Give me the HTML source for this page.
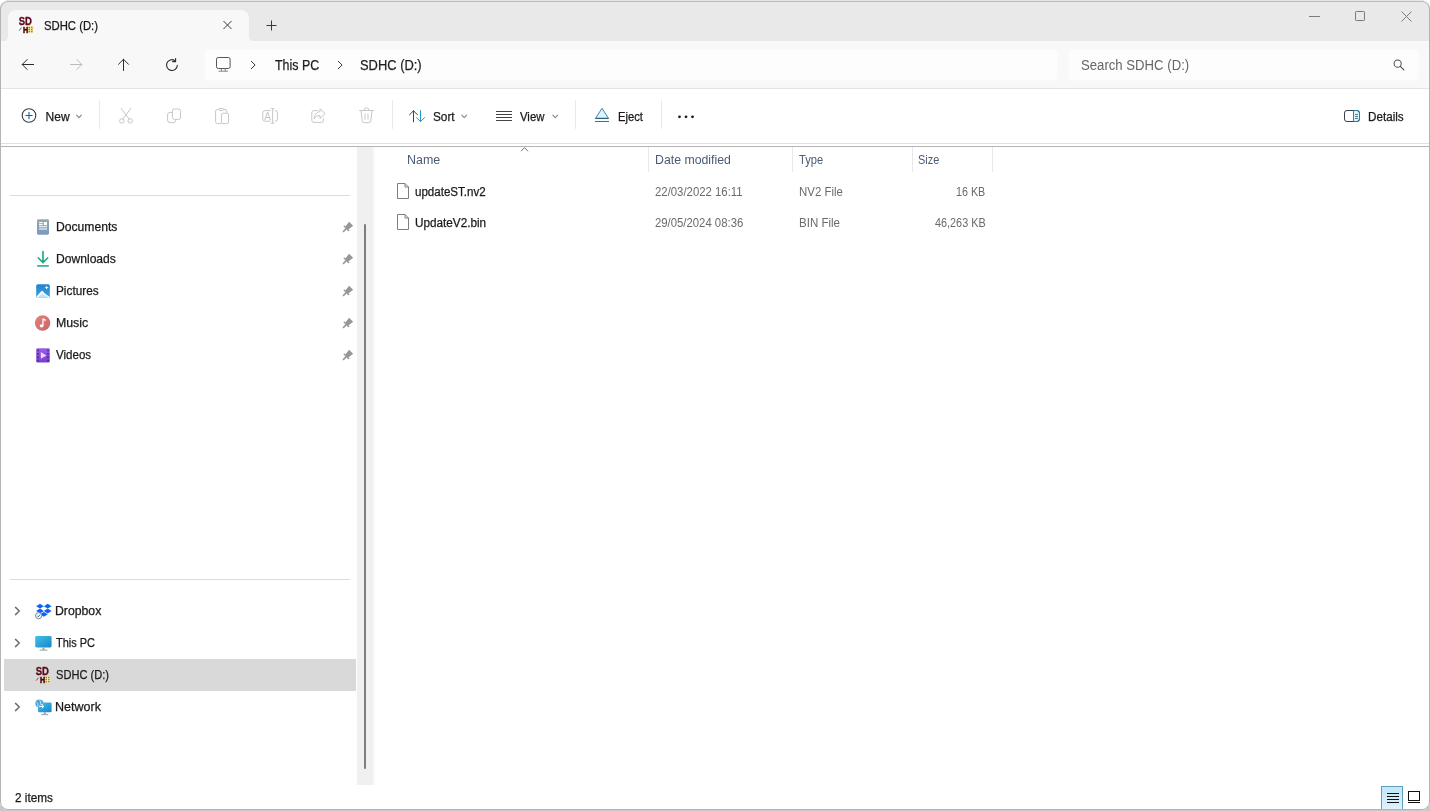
<!DOCTYPE html>
<html lang="en">
<head>
<meta charset="utf-8">
<title>SDHC (D:)</title>
<style>
*{box-sizing:border-box;margin:0;padding:0}
html,body{width:1430px;height:811px;overflow:hidden;background:#fff}
#toprow{position:absolute;left:6px;top:0;width:1418px;height:2px;background:#e6e6e6}
body{font-family:"Liberation Sans",sans-serif;font-size:12px;color:#1b1b1b;position:relative}
#under{position:absolute;left:0;top:800px;width:1430px;height:11px;background:#c8c8c8}
#win{will-change:transform;position:absolute;left:0;top:1px;width:1430px;height:809px;border-radius:8px;overflow:hidden;background:#fff}
#win > *{margin-top:-1px}
#frame{position:absolute;left:0;top:1px;width:1430px;height:809px;border-radius:8px;border:1px solid #b4b4b4;border-top-color:#bcbcbc;pointer-events:none}
#titlebar{position:absolute;left:0;top:0;width:1430px;height:42px;background:#e9e9e9}
#tab{position:absolute;left:8px;top:10px;width:241px;height:32px;background:#f8f8f8;border-radius:8px 8px 0 0}
#navrow{position:absolute;left:0;top:41px;width:1430px;height:48px;background:#f8f8f8;border-bottom:1px solid #e4e4e4}
#addr{position:absolute;left:205px;top:50px;width:852px;height:30px;background:#fdfdfd;border-radius:4px;box-shadow:0 0 2px 1px #fbfbfb}
#search{position:absolute;left:1069px;top:50px;width:349px;height:30px;background:#fdfdfd;border-radius:4px;box-shadow:0 0 2px 1px #fbfbfb}
#toolbar{position:absolute;left:0;top:89px;width:1430px;height:55px;background:#fff}
.t{position:absolute;white-space:nowrap;line-height:1;-webkit-text-stroke:0.25px currentColor}
.sep{position:absolute;width:1px;background:#eaeaea}
svg{position:absolute;overflow:visible}
#main{position:absolute;left:0;top:143px;width:1430px;height:668px;background:#fff}
#line1{position:absolute;left:0;top:143px;width:1430px;height:1px;background:#e0e0e0}
#line2{position:absolute;left:0;top:146px;width:1430px;height:1px;background:#b4b4b4}
#gutter{position:absolute;left:357px;top:147px;width:16px;height:638px;background:#f0f0f0}
#gutter2{position:absolute;left:373px;top:147px;width:2px;height:638px;background:#f9f9f9}
#thumb{position:absolute;left:364px;top:224px;width:2px;height:545px;background:#7e7e7e;border-radius:1px}
.hr{position:absolute;left:10px;width:340px;height:1px;background:#dcdcdc}
#sel{position:absolute;left:4px;top:659px;width:352px;height:32px;background:#d9d9d9}
.colsep{position:absolute;top:147px;width:1px;height:25px;background:#e8e8e8}
#vbtn{position:absolute;left:1381px;top:786px;width:22px;height:25px;background:linear-gradient(#c3e6f8,#dff2fc);border:1px solid #5f9fc0}
.tabcurveL{position:absolute;left:2px;top:36px;width:6px;height:6px;background:radial-gradient(circle at 0 0,#e9e9e9 5.6px,#f8f8f8 6.2px)}
.tabcurveR{position:absolute;left:249px;top:36px;width:6px;height:6px;background:radial-gradient(circle at 100% 0,#e9e9e9 5.6px,#f8f8f8 6.2px)}

</style>
</head>
<body>
<div id="under"></div><div id="toprow"></div>
<div id="win">
<div id="titlebar"><div id="tab"></div>
<div class="tabcurveL"></div><div class="tabcurveR"></div>
<svg style="left:18px;top:17px" width="16" height="16" viewBox="0 0 16 16">
<text x="0.7" y="7.5" font-family="Liberation Sans, sans-serif" font-weight="bold" font-size="10.5" fill="#5e0a1c" stroke="#5e0a1c" stroke-width="0.35" textLength="13.2" lengthAdjust="spacingAndGlyphs">SD</text>
<rect x="10" y="9.4" width="5.2" height="6.2" fill="#f6e9a0"/>
<g fill="#8a6a14"><rect x="10.6" y="9.8" width="1.3" height="1.3"/><rect x="13.2" y="9.8" width="1.3" height="1.3"/><rect x="10.6" y="11.9" width="1.3" height="1.3"/><rect x="13.2" y="11.9" width="1.3" height="1.3"/><rect x="10.6" y="14" width="1.3" height="1.3"/><rect x="13.2" y="14" width="1.3" height="1.3"/></g>
<text x="4.9" y="15.5" font-family="Liberation Sans, sans-serif" font-weight="bold" font-size="8.7" fill="#4a0606" stroke="#5a0a08" stroke-width="0.6" textLength="5.2" lengthAdjust="spacingAndGlyphs">H</text>
<path d="M1.2 13.6 L3.6 10.6" stroke="#5a4a4a" stroke-width="0.9" fill="none"/>
</svg>
<div class="t" style="left:43.92px;top:19.5px;font-size:12px;color:#1a1a1a;transform:scaleX(0.9419);transform-origin:0 50%;">SDHC (D:)</div>
<svg style="left:223px;top:20px" width="9" height="9" viewBox="0 0 9 9"><g transform="translate(0 0.5)"><path d="M0.5 0.5 L8.5 8.5 M8.5 0.5 L0.5 8.5" stroke="#3a3a3a" stroke-width="1" fill="none"/></g></svg>
<svg style="left:266px;top:20px" width="11" height="11" viewBox="0 0 11 11"><path d="M5.5 0.5 V10.5 M0.5 5.5 H10.5" stroke="#3a3a3a" stroke-width="1" fill="none"/></svg>
<svg style="left:1309px;top:16px" width="12" height="2" viewBox="0 0 12 2"><path d="M0 0.5 H11" stroke="#7c7c7c" stroke-width="1"/></svg>
<svg style="left:1355px;top:11px" width="11" height="11" viewBox="0 0 11 11"><rect x="0.5" y="0.5" width="9" height="9" rx="0.8" fill="none" stroke="#787878" stroke-width="1"/></svg>
<svg style="left:1401px;top:11px" width="11" height="11" viewBox="0 0 11 11"><path d="M0.5 0.5 L10.5 10.5 M10.5 0.5 L0.5 10.5" stroke="#7c7c7c" stroke-width="1" fill="none"/></svg>
</div>
<div id="navrow"></div><div id="addr"></div><div id="search"></div>
<svg style="left:21px;top:57px" width="14" height="14" viewBox="0 0 14 14"><g transform="translate(0 0.5)"><path d="M12.6 7 H1.2 M6.2 2 L1.2 7 L6.2 12" stroke="#2b2b2b" stroke-width="1" fill="none" stroke-linecap="round" stroke-linejoin="round"/></g></svg>
<svg style="left:69px;top:57px" width="14" height="14" viewBox="0 0 14 14"><g transform="translate(0 0.5)"><path d="M1.4 7 H12.8 M7.8 2 L12.8 7 L7.8 12" stroke="#bdbdbd" stroke-width="1" fill="none" stroke-linecap="round" stroke-linejoin="round"/></g></svg>
<svg style="left:116px;top:57px" width="14" height="14" viewBox="0 0 14 14"><g transform="translate(0.5 0.5)"><path d="M7 13 V1.8 M2 6.8 L7 1.8 L12 6.8" stroke="#2b2b2b" stroke-width="1" fill="none" stroke-linecap="round" stroke-linejoin="round"/></g></svg>
<svg style="left:165px;top:58px" width="14" height="14" viewBox="0 0 14 14"><path d="M12.3 7.2 A5.4 5.4 0 1 1 9.9 2.6" stroke="#2b2b2b" stroke-width="1.1" fill="none" stroke-linecap="round"/><path d="M10.6 0.6 V3.6 H7.6" stroke="#2b2b2b" stroke-width="1.1" fill="none" stroke-linecap="round" stroke-linejoin="round"/></svg>
<svg style="left:216px;top:57px" width="15" height="15" viewBox="0 0 15 15"><rect x="0.5" y="0.5" width="13.6" height="11" rx="1.8" fill="none" stroke="#555" stroke-width="1"/><path d="M5.4 11.6 V14 M9.2 11.4 V14 M2.6 14.2 H12" stroke="#777" stroke-width="0.9" fill="none"/></svg>
<svg style="left:250px;top:60px" width="6" height="9" viewBox="0 0 6 9"><g transform="translate(0.5 0.5)"><path d="M0.8 0.8 L4.6 4.5 L0.8 8.2" stroke="#3a3a3a" stroke-width="1" fill="none" stroke-linecap="round" stroke-linejoin="round"/></g></svg>
<div class="t" style="left:275.40px;top:58.0px;font-size:14px;color:#1f1f1f;transform:scaleX(0.8878);transform-origin:0 50%;">This PC</div>
<svg style="left:337px;top:60px" width="6" height="9" viewBox="0 0 6 9"><g transform="translate(0.5 0.5)"><path d="M0.8 0.8 L4.6 4.5 L0.8 8.2" stroke="#3a3a3a" stroke-width="1" fill="none" stroke-linecap="round" stroke-linejoin="round"/></g></svg>
<div class="t" style="left:360.46px;top:58.0px;font-size:14px;color:#1f1f1f;transform:scaleX(0.9218);transform-origin:0 50%;">SDHC (D:)</div>
<div class="t" style="left:1080.76px;top:58.0px;font-size:14px;color:#666;transform:scaleX(0.9398);transform-origin:0 50%;-webkit-text-stroke:0;">Search SDHC (D:)</div>
<svg style="left:1393px;top:59px" width="11" height="11" viewBox="0 0 12 12"><g transform="translate(0.5 0.5)"><circle cx="4.6" cy="4.6" r="3.9" fill="none" stroke="#4a4a4a" stroke-width="1.1"/><path d="M7.5 7.5 L11.3 11.3" stroke="#4a4a4a" stroke-width="1.2" stroke-linecap="round"/></g></svg>
<div id="toolbar"></div>
<svg style="left:21px;top:108px" width="15" height="15" viewBox="0 0 15 15"><g transform="translate(0.5 0)"><circle cx="7.5" cy="7.5" r="6.8" fill="none" stroke="#3c3c3c" stroke-width="1.1"/><path d="M7.5 4.3 V10.7 M4.3 7.5 H10.7" stroke="#0a64b4" stroke-width="1.1" stroke-linecap="round"/></g></svg>
<div class="t" style="left:45.60px;top:110.5px;font-size:12px;color:#1b1b1b;transform:scaleX(1.0000);transform-origin:0 50%;">New</div>
<svg style="left:76px;top:114px" width="6" height="4" viewBox="0 0 6 4"><g transform="translate(0 0.5)"><path d="M0.6 0.7 L3 3.1 L5.4 0.7" stroke="#858585" stroke-width="1.1" fill="none" stroke-linecap="round" stroke-linejoin="round"/></g></svg>
<div class="sep" style="left:99px;top:100px;height:29px"></div>
<svg style="left:119px;top:108px" width="14" height="16" viewBox="0 0 14 16"><path d="M2.2 0.5 L10.3 11.2 M11.8 0.5 L3.7 11.2" stroke="#c4c7ca" stroke-width="1" fill="none" stroke-linecap="round"/><circle cx="2.8" cy="12.9" r="2.2" fill="none" stroke="#c4c7ca" stroke-width="1"/><circle cx="11.2" cy="12.9" r="2.2" fill="none" stroke="#c4c7ca" stroke-width="1"/></svg>
<svg style="left:167px;top:109px" width="15" height="14" viewBox="0 0 15 14"><rect x="5.4" y="0" width="8.2" height="10.4" rx="2.2" fill="none" stroke="#c4c7ca" stroke-width="1"/><path d="M5.4 3.4 H3 A2.4 2.4 0 0 0 0.6 5.8 V11.2 A2.4 2.4 0 0 0 3 13.6 H6.2 A2.4 2.4 0 0 0 8.6 11.2 V10.4" fill="none" stroke="#c4c7ca" stroke-width="1"/></svg>
<svg style="left:215px;top:108px" width="15" height="16" viewBox="0 0 15 16"><path d="M6.4 15.6 H2.4 A1.8 1.8 0 0 1 0.6 13.8 V3.2 A1.8 1.8 0 0 1 2.4 1.4 H3.8" fill="none" stroke="#c4c7ca" stroke-width="1"/><path d="M8.6 1.4 H10 A1.8 1.8 0 0 1 11.8 3.2 V5.2" fill="none" stroke="#c4c7ca" stroke-width="1"/><rect x="3.8" y="0.4" width="4.8" height="2.2" rx="1.1" fill="none" stroke="#c4c7ca" stroke-width="1"/><rect x="6.4" y="5.2" width="7.2" height="10.4" rx="1.8" fill="none" stroke="#c4c7ca" stroke-width="1"/></svg>
<svg style="left:262px;top:108px" width="16" height="16" viewBox="0 0 16 16"><path d="M8.6 2.6 H2.8 A2 2 0 0 0 0.8 4.6 V11.2 A2 2 0 0 0 2.8 13.2 H8.6 M12.6 2.6 H13.4 A2 2 0 0 1 15.4 4.6 V11.2 A2 2 0 0 1 13.4 13.2 H12.6" fill="none" stroke="#c4c7ca" stroke-width="1"/><path d="M10.6 0.6 V15.2 M8.8 0.6 H12.4 M8.8 15.2 H12.4" stroke="#c4c7ca" stroke-width="1" fill="none"/><text x="2.3" y="11.5" font-family="Liberation Sans, sans-serif" font-size="10" fill="#c4c7ca">A</text></svg>
<svg style="left:311px;top:108px" width="15" height="16" viewBox="0 0 15 16"><path d="M6.4 2.6 H3 A2.2 2.2 0 0 0 0.8 4.8 V12.2 A2.2 2.2 0 0 0 3 14.4 H10.4 A2.2 2.2 0 0 0 12.6 12.2 V10.6" fill="none" stroke="#c4c7ca" stroke-width="1" stroke-linecap="round"/><path d="M9 0.8 L14.2 5.6 L9 10.4 V7.6 C6.2 7.4 4.4 8.6 3.2 10.8 C3.4 6.8 5.6 4 9 3.6 Z" fill="none" stroke="#c4c7ca" stroke-width="1" stroke-linejoin="round"/></svg>
<svg style="left:359px;top:107px" width="15" height="16" viewBox="0 0 15 16"><g transform="translate(0 0.5)"><path d="M0.6 3 H14.4 M5 2.8 A2.5 2.5 0 0 1 10 2.8" stroke="#c4c7ca" stroke-width="1" fill="none" stroke-linecap="round"/><path d="M2 3.2 L3.2 13.4 A2 2 0 0 0 5.2 15.2 H9.8 A2 2 0 0 0 11.8 13.4 L13 3.2" stroke="#c4c7ca" stroke-width="1" fill="none"/><path d="M6 6.4 V11.8 M9 6.4 V11.8" stroke="#c4c7ca" stroke-width="1" stroke-linecap="round"/></g></svg>
<div class="sep" style="left:392px;top:100px;height:29px"></div>
<svg style="left:409px;top:110px" width="17" height="13" viewBox="0 0 17 13"><path d="M4.5 11.8 V0.8 M0.5 4.8 L4.5 0.8 L8.5 4.8" stroke="#444" stroke-width="1" fill="none" stroke-linecap="round" stroke-linejoin="round"/><path d="M11.5 0.6 V11.6 M7.5 7.6 L11.5 11.6 L15.5 7.6" stroke="#2196c4" stroke-width="1" fill="none" stroke-linecap="round" stroke-linejoin="round"/></svg>
<div class="t" style="left:432.69px;top:110.5px;font-size:12px;color:#1b1b1b;transform:scaleX(0.9832);transform-origin:0 50%;">Sort</div>
<svg style="left:461px;top:114px" width="6" height="4" viewBox="0 0 6 4"><g transform="translate(0.2 0.5)"><path d="M0.6 0.7 L3 3.1 L5.4 0.7" stroke="#858585" stroke-width="1.1" fill="none" stroke-linecap="round" stroke-linejoin="round"/></g></svg>
<svg style="left:496px;top:110px" width="16" height="12" viewBox="0 0 16 12"><path d="M0 1.5 H16 M0 4.5 H16 M0 7.5 H16 M0 10.5 H16" stroke="#444" stroke-width="1" fill="none"/></svg>
<div class="t" style="left:520.00px;top:110.5px;font-size:12px;color:#1b1b1b;transform:scaleX(0.9462);transform-origin:0 50%;">View</div>
<svg style="left:552px;top:114px" width="6" height="4" viewBox="0 0 6 4"><g transform="translate(0.2 0.5)"><path d="M0.6 0.7 L3 3.1 L5.4 0.7" stroke="#858585" stroke-width="1.1" fill="none" stroke-linecap="round" stroke-linejoin="round"/></g></svg>
<div class="sep" style="left:575px;top:100px;height:29px"></div>
<svg style="left:594px;top:107px" width="16" height="16" viewBox="0 0 16 16"><path d="M8 1.3 L14.5 11.4 H1.5 Z" fill="#def3fb" stroke="#3f86ad" stroke-width="1" stroke-linejoin="round"/><path d="M1.5 11.4 H14.5" stroke="#2b5f80" stroke-width="1.1"/><path d="M1 14.5 H15" stroke="#2f7396" stroke-width="1"/></svg>
<div class="t" style="left:617.90px;top:110.5px;font-size:12px;color:#1b1b1b;transform:scaleX(0.9351);transform-origin:0 50%;">Eject</div>
<div class="sep" style="left:661px;top:100px;height:29px"></div>
<svg style="left:678px;top:115px" width="16" height="3" viewBox="0 0 16 3"><circle cx="1.5" cy="1.8" r="1.4" fill="#1c1c1c"/><circle cx="8" cy="1.8" r="1.4" fill="#1c1c1c"/><circle cx="14.5" cy="1.8" r="1.4" fill="#1c1c1c"/></svg>
<svg style="left:1344px;top:110px" width="16" height="12" viewBox="0 0 16 12"><path d="M9.5 0.5 H13 A2.5 2.5 0 0 1 15.5 3 V9 A2.5 2.5 0 0 1 13 11.5 H9.5 Z" fill="#dff3fb"/><rect x="0.5" y="0.5" width="15" height="11" rx="2.5" fill="none" stroke="#3a4047" stroke-width="1"/><path d="M9.5 0.5 V11.5" stroke="#2a7ea6" stroke-width="1"/><path d="M9.5 0.5 H13 A2.5 2.5 0 0 1 15.5 3 V9 A2.5 2.5 0 0 1 13 11.5 H9.5" stroke="#2a7ea6" stroke-width="1" fill="none"/><path d="M11 4.5 H14 M11 6.5 H14 M11 8.5 H14" stroke="#3b6f8f" stroke-width="0.9"/></svg>
<div class="t" style="left:1367.60px;top:110.5px;font-size:12px;color:#1b1b1b;transform:scaleX(0.9731);transform-origin:0 50%;">Details</div>
<div id="main"></div><div id="line1"></div><div id="line2"></div>
<div id="gutter"></div><div id="gutter2"></div><div id="thumb"></div>
<div class="hr" style="top:195px"></div><div class="hr" style="top:579px"></div>
<div id="sel"></div>
<svg style="left:37px;top:219px" width="12" height="16" viewBox="0 0 12 16"><defs><linearGradient id="gd" x1="0" y1="0" x2="0" y2="1"><stop offset="0" stop-color="#94a9b0"/><stop offset="1" stop-color="#7b98c2"/></linearGradient></defs><rect x="0" y="0.3" width="12" height="15.4" rx="1.4" fill="url(#gd)"/><path d="M2 3.6 H5.6 M2 5.6 H5.6 M2 7.8 H10 M2 10 H10" stroke="#fff" stroke-width="1.1"/><rect x="6.8" y="3" width="3.2" height="3.2" fill="#fff"/></svg>
<div class="t" style="left:55.50px;top:221.0px;font-size:12px;color:#1b1b1b;transform:scaleX(1.0124);transform-origin:0 50%;">Documents</div>
<svg style="left:342px;top:221px" width="12" height="12" viewBox="0 0 12 12"><path d="M7.12 0.82 L11.08 4.78 L6.49 8.53 L7.62 9.66 L6.70 10.58 L4.54 8.42 L1.57 11.39 L0.51 10.33 L3.48 7.36 L1.32 5.20 L2.24 4.28 L3.37 5.41 Z" fill="#979797"/></svg>
<svg style="left:37px;top:251px" width="12" height="16" viewBox="0 0 12 16"><path d="M6 0.6 V11.4 M1.4 7 L6 11.6 L10.6 7" stroke="#23a98b" stroke-width="1.7" fill="none" stroke-linecap="round" stroke-linejoin="round"/><path d="M0.2 14.9 H11.8" stroke="#2aa98e" stroke-width="1.6"/></svg>
<div class="t" style="left:55.50px;top:253.0px;font-size:12px;color:#1b1b1b;transform:scaleX(1.0086);transform-origin:0 50%;">Downloads</div>
<svg style="left:342px;top:253px" width="12" height="12" viewBox="0 0 12 12"><path d="M7.12 0.82 L11.08 4.78 L6.49 8.53 L7.62 9.66 L6.70 10.58 L4.54 8.42 L1.57 11.39 L0.51 10.33 L3.48 7.36 L1.32 5.20 L2.24 4.28 L3.37 5.41 Z" fill="#979797"/></svg>
<svg style="left:36px;top:284px" width="14" height="14" viewBox="0 0 14 14"><defs><linearGradient id="gp" x1="0" y1="0" x2="0" y2="1"><stop offset="0" stop-color="#1b86cf"/><stop offset="1" stop-color="#3aa0e6"/></linearGradient></defs><rect x="0.2" y="0.2" width="13.6" height="13.6" rx="1.6" fill="url(#gp)"/><path d="M0.6 12.6 L6 6.6 L10 10.6 L13.4 12.6 V13.4 H0.6 Z" fill="#fff"/><path d="M2 13 L6 9.4 L12 13 Z" fill="#bfe3fb"/><path d="M10.6 1.6 L11.2 3 L12.6 3.6 L11.2 4.2 L10.6 5.6 L10 4.2 L8.6 3.6 L10 3 Z" fill="#fff"/></svg>
<div class="t" style="left:55.50px;top:285.0px;font-size:12px;color:#1b1b1b;transform:scaleX(0.9833);transform-origin:0 50%;">Pictures</div>
<svg style="left:342px;top:285px" width="12" height="12" viewBox="0 0 12 12"><path d="M7.12 0.82 L11.08 4.78 L6.49 8.53 L7.62 9.66 L6.70 10.58 L4.54 8.42 L1.57 11.39 L0.51 10.33 L3.48 7.36 L1.32 5.20 L2.24 4.28 L3.37 5.41 Z" fill="#979797"/></svg>
<svg style="left:34px;top:315px" width="16" height="16" viewBox="0 0 16 16"><g transform="translate(0.6 0)"><defs><linearGradient id="gm" x1="0" y1="0" x2="1" y2="1"><stop offset="0" stop-color="#e0837a"/><stop offset="1" stop-color="#cf6468"/></linearGradient></defs><circle cx="8" cy="8" r="7.7" fill="url(#gm)"/><path d="M8.4 3.4 V10.6" stroke="#fff" stroke-width="1.3"/><path d="M8.4 3.4 L11.2 4.4 V6 L8.4 5 Z" fill="#fff"/><ellipse cx="7" cy="10.8" rx="1.9" ry="1.6" fill="#fff"/></g></svg>
<div class="t" style="left:55.50px;top:317.0px;font-size:12px;color:#1b1b1b;transform:scaleX(1.0267);transform-origin:0 50%;">Music</div>
<svg style="left:342px;top:317px" width="12" height="12" viewBox="0 0 12 12"><path d="M7.12 0.82 L11.08 4.78 L6.49 8.53 L7.62 9.66 L6.70 10.58 L4.54 8.42 L1.57 11.39 L0.51 10.33 L3.48 7.36 L1.32 5.20 L2.24 4.28 L3.37 5.41 Z" fill="#979797"/></svg>
<svg style="left:36px;top:348px" width="14" height="15" viewBox="0 0 14 15"><defs><linearGradient id="gv" x1="0" y1="0" x2="0" y2="1"><stop offset="0" stop-color="#9a5ee6"/><stop offset="1" stop-color="#7a3fc8"/></linearGradient></defs><rect x="0.2" y="0.2" width="13.6" height="14.4" rx="1.4" fill="url(#gv)"/><path d="M4.8 4 L10.4 7.4 L4.8 10.8 Z" fill="#ead6ff"/><g fill="#4a2390"><rect x="1.2" y="1.6" width="1.6" height="1.6"/><rect x="1.2" y="5" width="1.6" height="1.6"/><rect x="1.2" y="8.4" width="1.6" height="1.6"/><rect x="1.2" y="11.8" width="1.6" height="1.6"/><rect x="11.2" y="1.6" width="1.6" height="1.6"/><rect x="11.2" y="5" width="1.6" height="1.6"/><rect x="11.2" y="8.4" width="1.6" height="1.6"/><rect x="11.2" y="11.8" width="1.6" height="1.6"/></g></svg>
<div class="t" style="left:56.00px;top:349.0px;font-size:12px;color:#1b1b1b;transform:scaleX(0.9639);transform-origin:0 50%;">Videos</div>
<svg style="left:342px;top:349px" width="12" height="12" viewBox="0 0 12 12"><path d="M7.12 0.82 L11.08 4.78 L6.49 8.53 L7.62 9.66 L6.70 10.58 L4.54 8.42 L1.57 11.39 L0.51 10.33 L3.48 7.36 L1.32 5.20 L2.24 4.28 L3.37 5.41 Z" fill="#979797"/></svg>
<svg style="left:14px;top:606px" width="6" height="10" viewBox="0 0 6 10"><g transform="translate(0.5 0)"><path d="M1 1.4 L4.8 5 L1 8.6" stroke="#6e6e6e" stroke-width="1.5" fill="none" stroke-linecap="round" stroke-linejoin="round"/></g></svg>
<svg style="left:35px;top:603px" width="17" height="16" viewBox="0 0 17 16"><g transform="translate(0 0.5)"><g fill="#0d63f3"><path d="M5 0.3 L8.85 2.7 L5 5.1 L1.2 2.7 Z"/><path d="M12.7 0.3 L16.5 2.7 L12.7 5.1 L8.85 2.7 Z"/><path d="M5 5.1 L8.85 7.5 L5 9.9 L1.2 7.5 Z"/><path d="M12.7 5.1 L16.5 7.5 L12.7 9.9 L8.85 7.5 Z"/><path d="M8.85 8.4 L12.7 10.8 L8.85 13.2 L5 10.8 Z"/></g><circle cx="3.6" cy="12.2" r="3.1" fill="#f4f6f8" stroke="#808a94" stroke-width="1"/><path d="M2.2 12.2 L3.3 13.3 L5.1 11.2" stroke="#3f6fb8" stroke-width="1" fill="none"/></g></svg>
<div class="t" style="left:55.30px;top:605.0px;font-size:12px;color:#1b1b1b;transform:scaleX(1.0205);transform-origin:0 50%;">Dropbox</div>
<svg style="left:14px;top:638px" width="6" height="10" viewBox="0 0 6 10"><g transform="translate(0.5 0)"><path d="M1 1.4 L4.8 5 L1 8.6" stroke="#6e6e6e" stroke-width="1.5" fill="none" stroke-linecap="round" stroke-linejoin="round"/></g></svg>
<svg style="left:35px;top:635px" width="17" height="16" viewBox="0 0 17 16"><g transform="translate(0 0.5)"><defs><linearGradient id="gpc" x1="0" y1="0" x2="1" y2="1"><stop offset="0" stop-color="#45c1ea"/><stop offset="1" stop-color="#1687c8"/></linearGradient></defs><rect x="0.2" y="0.4" width="16.4" height="11.6" rx="1.4" fill="url(#gpc)"/><path d="M7.4 12 H9.6 V14.2 H7.4 Z" fill="#9aa7b0"/><path d="M4.6 14.6 H12.4" stroke="#9aa7b0" stroke-width="1.1"/></g></svg>
<div class="t" style="left:56.00px;top:637.0px;font-size:12px;color:#1b1b1b;transform:scaleX(0.9143);transform-origin:0 50%;">This PC</div>
<svg style="left:35px;top:667px" width="16" height="16" viewBox="0 0 16 16">
<text x="0.7" y="7.5" font-family="Liberation Sans, sans-serif" font-weight="bold" font-size="10.5" fill="#5e0a1c" stroke="#5e0a1c" stroke-width="0.35" textLength="13.2" lengthAdjust="spacingAndGlyphs">SD</text>
<rect x="10" y="9.4" width="5.2" height="6.2" fill="#f6e9a0"/>
<g fill="#8a6a14"><rect x="10.6" y="9.8" width="1.3" height="1.3"/><rect x="13.2" y="9.8" width="1.3" height="1.3"/><rect x="10.6" y="11.9" width="1.3" height="1.3"/><rect x="13.2" y="11.9" width="1.3" height="1.3"/><rect x="10.6" y="14" width="1.3" height="1.3"/><rect x="13.2" y="14" width="1.3" height="1.3"/></g>
<text x="4.9" y="15.5" font-family="Liberation Sans, sans-serif" font-weight="bold" font-size="8.7" fill="#4a0606" stroke="#5a0a08" stroke-width="0.6" textLength="5.2" lengthAdjust="spacingAndGlyphs">H</text>
<path d="M1.2 13.6 L3.6 10.6" stroke="#5a4a4a" stroke-width="0.9" fill="none"/>
</svg>
<div class="t" style="left:55.79px;top:669.0px;font-size:12px;color:#1b1b1b;transform:scaleX(0.9235);transform-origin:0 50%;">SDHC (D:)</div>
<svg style="left:14px;top:702px" width="6" height="10" viewBox="0 0 6 10"><g transform="translate(0.5 0)"><path d="M1 1.4 L4.8 5 L1 8.6" stroke="#6e6e6e" stroke-width="1.5" fill="none" stroke-linecap="round" stroke-linejoin="round"/></g></svg>
<svg style="left:35px;top:699px" width="17" height="17" viewBox="0 0 17 17"><defs><linearGradient id="gn" x1="0" y1="0" x2="1" y2="1"><stop offset="0" stop-color="#45c1ea"/><stop offset="1" stop-color="#1687c8"/></linearGradient></defs><rect x="3" y="3.6" width="13.6" height="9.6" rx="1.2" fill="url(#gn)"/><path d="M8.8 13.2 H10.8 V15.2 H8.8 Z" fill="#9aa7b0"/><path d="M6.4 15.6 H13.2" stroke="#9aa7b0" stroke-width="1.1"/><circle cx="4.4" cy="4.6" r="4" fill="#4aa3d8"/><path d="M1.6 3 C3 4 3.4 5.2 2.6 7.6 M4.4 0.8 C5.6 2.4 6 3.6 5.6 5.4 C6.4 5.6 7.4 5.6 8 5" stroke="#cfeaf8" stroke-width="0.9" fill="none"/><path d="M4 7.4 H8.6 M7 5.8 L8.8 7.4 L7 9" stroke="#fff" stroke-width="1" fill="none"/></svg>
<div class="t" style="left:55.30px;top:701.0px;font-size:12px;color:#1b1b1b;transform:scaleX(1.0442);transform-origin:0 50%;">Network</div>
<div class="colsep" style="left:648px"></div>
<div class="colsep" style="left:792px"></div>
<div class="colsep" style="left:912px"></div>
<div class="colsep" style="left:992px"></div>
<div class="t" style="left:406.60px;top:154.0px;font-size:12px;color:#4c5a72;transform:scaleX(1.0362);transform-origin:0 50%;-webkit-text-stroke:0;">Name</div>
<svg style="left:520px;top:147px" width="8" height="5" viewBox="0 0 8 5"><g transform="translate(0.5 0)"><path d="M0.5 4.2 L4 0.7 L7.5 4.2" stroke="#6a6a6a" stroke-width="1" fill="none"/></g></svg>
<div class="t" style="left:654.60px;top:154.0px;font-size:12px;color:#4c5a72;transform:scaleX(1.0250);transform-origin:0 50%;-webkit-text-stroke:0;">Date modified</div>
<div class="t" style="left:799.45px;top:154.0px;font-size:12px;color:#4c5a72;transform:scaleX(0.9276);transform-origin:0 50%;-webkit-text-stroke:0;">Type</div>
<div class="t" style="left:918.00px;top:154.0px;font-size:12px;color:#4c5a72;transform:scaleX(0.9110);transform-origin:0 50%;-webkit-text-stroke:0;">Size</div>
<svg style="left:397px;top:183px" width="13" height="16" viewBox="0 0 13 16"><path d="M0.5 0.5 H8 L11.5 4 V15.5 H0.5 Z" fill="#fff" stroke="#7e7e7e" stroke-width="1" stroke-linejoin="miter"/><path d="M8 0.5 V4 H11.5" fill="none" stroke="#7e7e7e" stroke-width="1"/></svg>
<div class="t" style="left:415.39px;top:185.5px;font-size:12px;color:#1b1b1b;transform:scaleX(0.9634);transform-origin:0 50%;">updateST.nv2</div>
<div class="t" style="left:655.03px;top:185.5px;font-size:12px;color:#6b6b6b;transform:scaleX(0.9469);transform-origin:0 50%;-webkit-text-stroke:0;">22/03/2022 16:11</div>
<div class="t" style="left:798.59px;top:185.5px;font-size:12px;color:#6b6b6b;transform:scaleX(0.9538);transform-origin:0 50%;-webkit-text-stroke:0;">NV2 File</div>
<div class="t" style="left:955.69px;top:185.5px;font-size:12px;color:#6b6b6b;transform:scaleX(0.8943);transform-origin:0 50%;-webkit-text-stroke:0;">16 KB</div>
<svg style="left:397px;top:214px" width="13" height="16" viewBox="0 0 13 16"><path d="M0.5 0.5 H8 L11.5 4 V15.5 H0.5 Z" fill="#fff" stroke="#7e7e7e" stroke-width="1" stroke-linejoin="miter"/><path d="M8 0.5 V4 H11.5" fill="none" stroke="#7e7e7e" stroke-width="1"/></svg>
<div class="t" style="left:415.16px;top:216.5px;font-size:12px;color:#1b1b1b;transform:scaleX(0.9774);transform-origin:0 50%;">UpdateV2.bin</div>
<div class="t" style="left:655.03px;top:216.5px;font-size:12px;color:#6b6b6b;transform:scaleX(0.9445);transform-origin:0 50%;-webkit-text-stroke:0;">29/05/2024 08:36</div>
<div class="t" style="left:798.59px;top:216.5px;font-size:12px;color:#6b6b6b;transform:scaleX(0.9592);transform-origin:0 50%;-webkit-text-stroke:0;">BIN File</div>
<div class="t" style="left:934.76px;top:216.5px;font-size:12px;color:#6b6b6b;transform:scaleX(0.9038);transform-origin:0 50%;-webkit-text-stroke:0;">46,263 KB</div>
<div class="t" style="left:15.12px;top:792.0px;font-size:12px;color:#1b1b1b;transform:scaleX(0.9801);transform-origin:0 50%;">2 items</div>
<div id="vbtn"></div>
<svg style="left:1387px;top:792px" width="12" height="11" viewBox="0 0 12 11"><g transform="translate(0 0.5)"><path d="M0 1 H12 M0 4 H12 M0 7 H12 M0 10 H12" stroke="#111" stroke-width="1"/></g></svg>
<svg style="left:1408px;top:791px" width="12" height="13" viewBox="0 0 12 13"><rect x="0.5" y="0.5" width="11" height="9" fill="none" stroke="#111" stroke-width="1"/><path d="M0 11.5 H12" stroke="#111" stroke-width="1"/></svg>
</div>
<div id="frame"></div>
</body>
</html>
